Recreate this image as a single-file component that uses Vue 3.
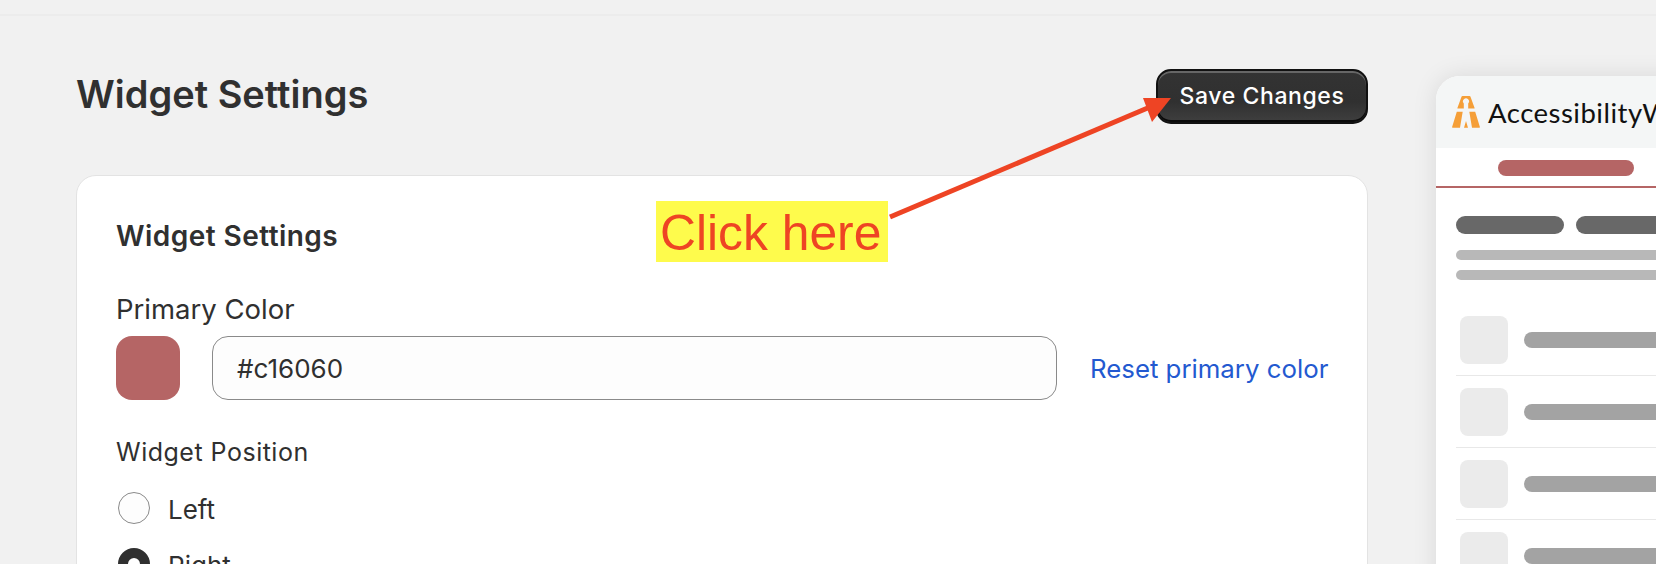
<script setup>
const rows = [1, 2, 3, 4];
</script>

<template>
  <div class="page">
    <div class="topbar"></div>
    <div class="layout">
      <main class="main">
        <header class="head">
          <h1 class="title">Widget Settings</h1>
          <button class="save">Save Changes</button>
        </header>
        <section class="card">
          <h2 class="card-title">Widget Settings</h2>
          <label class="label label--color">Primary Color</label>
          <div class="color-row">
            <span class="swatch"></span>
            <div class="input">#c16060</div>
            <a class="reset">Reset primary color</a>
          </div>
          <div class="label pos-label">Widget Position</div>
          <div class="radio-row">
            <span class="radio"></span>
            <span class="radio-text">Left</span>
          </div>
          <div class="radio-row">
            <span class="radio radio--on"></span>
            <span class="radio-text">Right</span>
          </div>
        </section>
      </main>

      <aside class="preview">
        <div class="pv-head">
          <svg class="logo" width="28" height="32" viewBox="0 0 28 32">
            <path fill="#f59f38" fill-rule="evenodd" d="M10.5 0h7q.8 0 1 .8L22.6 12q.1.5-.5.5H16.2v-5a3 3 0 1 0-4.4 0v5H5.900q-.6 0-.5-.5L9.500.8q.2-.8 1-.8z" />
            <path fill="#f59f38" d="M4.800 15.700h5.900L8 31.700H.7q-.8 0-.6-.7zM17.300 15.700h5.900L27.900 31q.2.7-.6.7H20zM14 25l2 6.700h-4z" />
          </svg>
          <span class="brand">AccessibilityWidget</span>
        </div>
        <div class="pv-tabs"><span class="pv-tab"></span></div>
        <div class="pv-body">
          <div class="pv-pills">
            <span class="pv-pill"></span>
            <span class="pv-pill"></span>
          </div>
          <span class="pv-line"></span>
          <span class="pv-line"></span>
          <div class="pv-list">
            <div v-for="row in rows" :key="row" class="pv-row">
              <span class="pv-icon"></span>
              <span class="pv-bar"></span>
            </div>
          </div>
        </div>
      </aside>
    </div>

    <!-- annotation over the screenshot -->
    <div class="callout">Click here</div>
    <svg class="arrow" width="1656" height="564" viewBox="0 0 1656 564">
      <line x1="890" y1="217" x2="1150" y2="107" stroke="#ee4424" stroke-width="5" />
      <polygon points="1171,98 1143,98 1152,122" fill="#ee4424" />
    </svg>
  </div>
</template>

<style>
html, body {
  margin: 0;
  height: 100%;
  overflow: hidden;
  background: #f1f1f1;
}
</style>

<style scoped>
.page {
  position: relative;
  height: 564px;
  overflow: hidden;
  background: #f1f1f1;
  color: #303030;
  font-family: Inter, "Liberation Sans", sans-serif;
}

.topbar {
  height: 14px;
  border-bottom: 2px solid #ececec;
}

.layout {
  display: flex;
  gap: 68px;
  padding: 52px 0 0 76px;
}

.main {
  flex: 0 0 1292px;
  min-width: 0;
}

.head {
  display: flex;
  justify-content: space-between;
  align-items: center;
  height: 56px;
  margin-bottom: 51px;
}

.title {
  margin: 0 0 5px;
  font-size: 38px;
  font-weight: 600;
}

.save {
  box-sizing: border-box;
  width: 212px;
  height: 55px;
  border: 2px solid #111;
  border-radius: 15px;
  background: linear-gradient(#333 0%, #303030 60%, #3f3f3f 100%);
  box-shadow: inset 0 2px 0 #666, inset 0 -2px 0 #0a0a0a;
  color: #fff;
  font-family: inherit;
  font-size: 23px;
  font-weight: 500;
  letter-spacing: 0.6px;
  padding: 0;
}

.card {
  box-sizing: border-box;
  height: 560px;
  padding: 42px 39px;
  background: #fff;
  border: 1px solid #e3e3e3;
  border-radius: 20px;
}

.card-title {
  margin: 0 0 37px;
  font-size: 28px;
  line-height: 36px;
  font-weight: 600;
  letter-spacing: 0.45px;
}

.label {
  display: block;
  font-size: 25px;
  letter-spacing: 0.5px;
  line-height: 36px;
  margin-bottom: 9px;
}

.label--color {
  font-size: 27.5px;
  letter-spacing: 0;
}

.color-row {
  display: flex;
  align-items: center;
}

.swatch {
  width: 64px;
  height: 64px;
  flex: none;
  border-radius: 16px;
  background: #b56565;
}

.input {
  box-sizing: border-box;
  flex: none;
  width: 845px;
  height: 64px;
  margin-left: 32px;
  padding-left: 24px;
  display: flex;
  align-items: center;
  border: 1px solid #8a8a8a;
  border-radius: 16px;
  background: #fdfdfd;
  font-size: 26px;
}

.reset {
  margin-left: 33px;
  font-size: 25.8px;
  color: #2359d0;
  white-space: nowrap;
}

.pos-label {
  margin-top: 34px;
  margin-bottom: 22px;
}

.radio-row {
  display: flex;
  align-items: center;
  gap: 18px;
  height: 32px;
  margin-bottom: 24px;
  padding-left: 2px;
  font-size: 26px;
}

.radio-text {
  padding-top: 2px;
}

.radio {
  box-sizing: border-box;
  width: 32px;
  height: 32px;
  border: 1px solid #8a8a8a;
  border-radius: 50%;
  background: #fdfdfd;
}

.radio--on {
  border: 10px solid #303030;
  background: #fff;
}

.preview {
  flex: 0 0 340px;
  height: 640px;
  background: #fff;
  border-radius: 24px;
  overflow: hidden;
  box-shadow: 0 0 24px rgba(0, 0, 0, 0.1);
  margin-top: 8px;
}

.pv-head {
  height: 72px;
  padding-left: 16px;
  display: flex;
  align-items: center;
  gap: 8px;
  background: #f4f6f6;
}

.brand {
  font-family: Lato, sans-serif;
  font-size: 27.5px;
  letter-spacing: 0.5px;
  color: #111;
  white-space: nowrap;
}

.pv-tabs {
  height: 40px;
  padding: 12px 0 0 62px;
  box-sizing: border-box;
  border-bottom: 2px solid #b56565;
}

.pv-tab {
  display: block;
  width: 136px;
  height: 16px;
  border-radius: 8px;
  background: #b56565;
}

.pv-body {
  padding: 28px 0 0 20px;
}

.pv-pills {
  display: flex;
  gap: 12px;
  margin-bottom: 16px;
}

.pv-pill {
  width: 108px;
  height: 18px;
  flex: none;
  border-radius: 9px;
  background: #686868;
}

.pv-line {
  display: block;
  height: 10px;
  margin-bottom: 10px;
  border-radius: 5px;
  background: #b8b8b8;
}

.pv-list {
  margin-top: 24px;
}

.pv-row {
  display: flex;
  align-items: center;
  gap: 16px;
  height: 71px;
  padding: 0 4px;
  border-bottom: 1px solid #e8e8e8;
}

.pv-icon {
  width: 48px;
  height: 48px;
  flex: none;
  border-radius: 8px;
  background: #ebebeb;
}

.pv-bar {
  flex: 1;
  height: 16px;
  border-radius: 8px;
  background: #a3a3a3;
}

.callout {
  position: absolute;
  left: 656px;
  top: 201px;
  box-sizing: border-box;
  width: 232px;
  height: 61px;
  padding-left: 4px;
  background: #fefb4c;
  color: #ee4424;
  font-family: "Liberation Sans", sans-serif;
  font-size: 49.8px;
  line-height: 65px;
  white-space: nowrap;
}

.arrow {
  position: absolute;
  left: 0;
  top: 0;
  pointer-events: none;
}
</style>
